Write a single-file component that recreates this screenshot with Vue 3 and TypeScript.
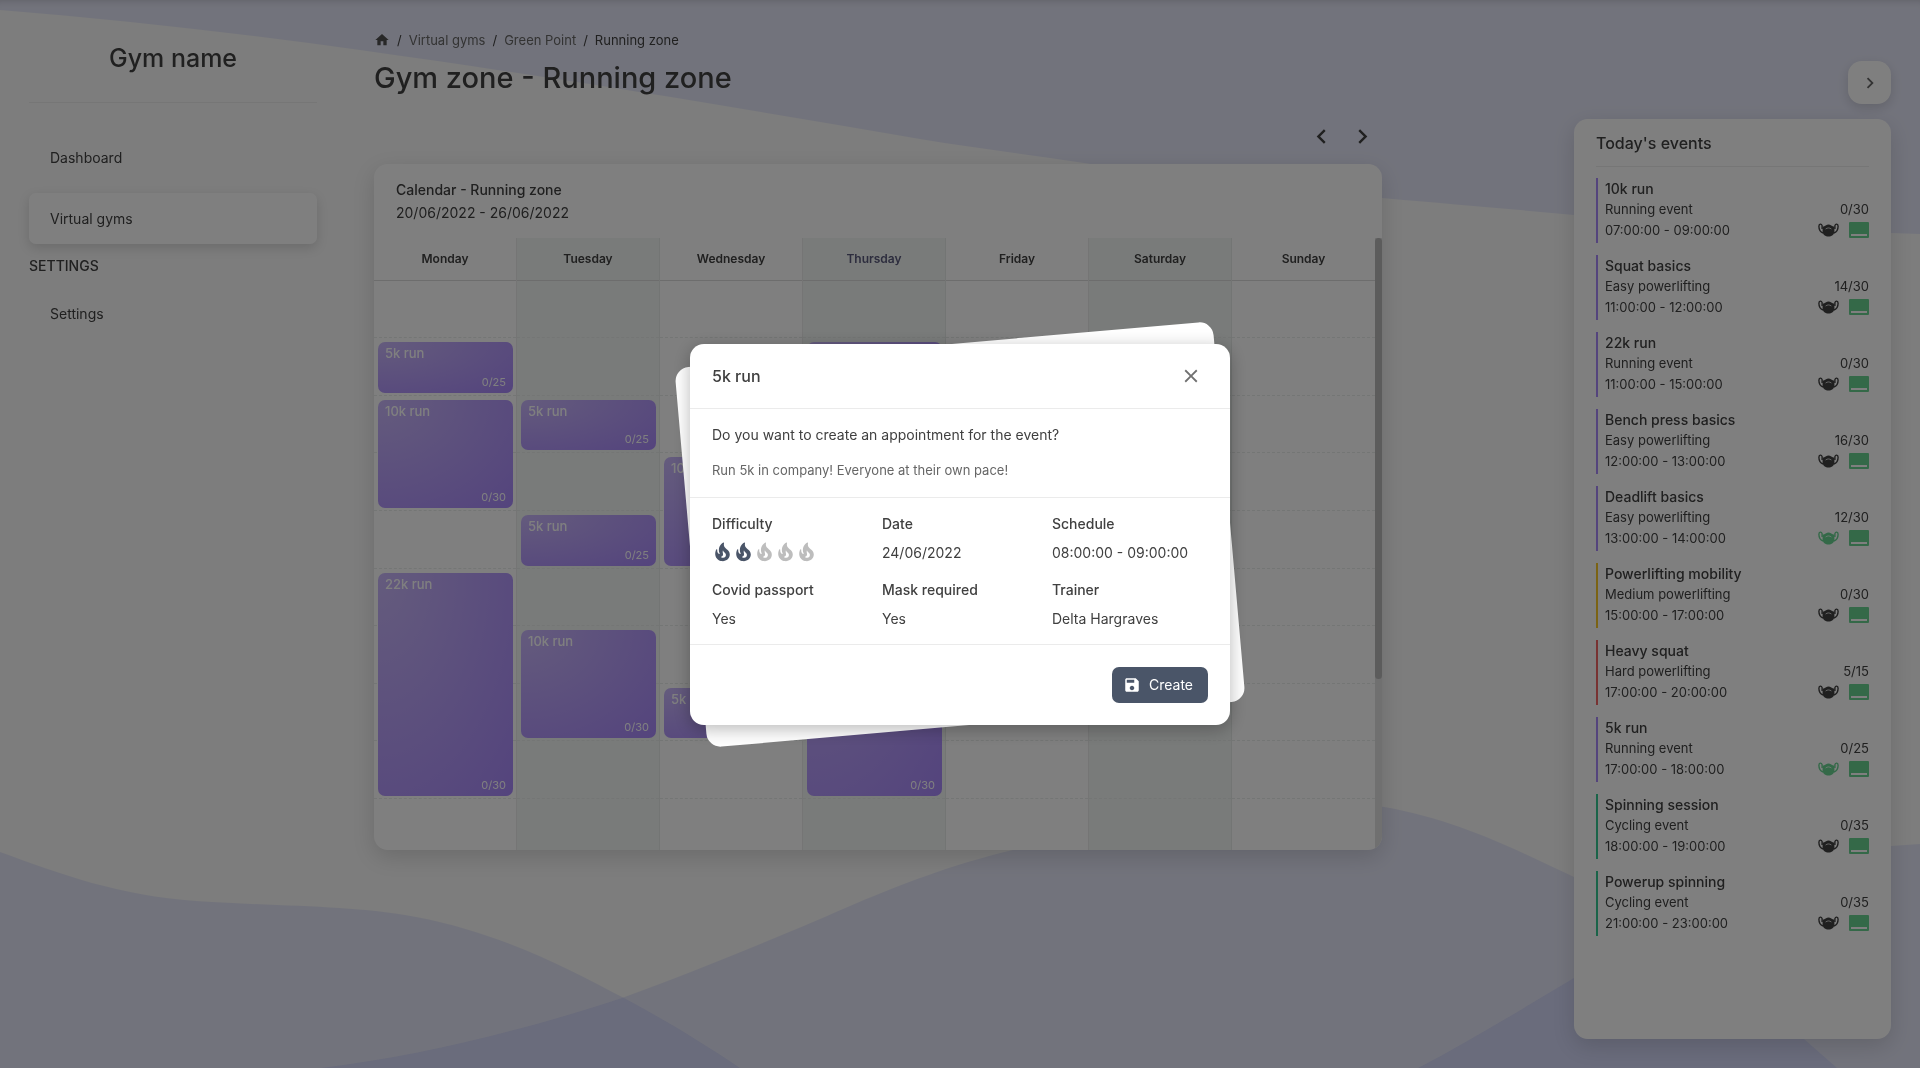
<script setup lang="ts">
interface CalendarEvent {
  name: string
  count: string
  start: number
  span: number
}

interface Day {
  name: string
  today?: boolean
  events: CalendarEvent[]
}

interface TodayEvent {
  name: string
  activity: string
  schedule: string
  count: string
  level: 'easy' | 'medium' | 'hard' | 'cycling'
  mask?: boolean
}

const run5 = (start: number): CalendarEvent => ({ name: '5k run', count: '0/25', start, span: 1 })
const run10 = (start: number): CalendarEvent => ({ name: '10k run', count: '0/30', start, span: 2 })
const run22 = (start: number): CalendarEvent => ({ name: '22k run', count: '0/30', start, span: 4 })

const days: Day[] = [
  { name: 'Monday', events: [run5(2), run10(3), run22(6)] },
  { name: 'Tuesday', events: [run5(3), run5(5), run10(7)] },
  { name: 'Wednesday', events: [run10(4), run5(8)] },
  { name: 'Thursday', today: true, events: [run5(2), run22(6)] },
  { name: 'Friday', events: [] },
  { name: 'Saturday', events: [] },
  { name: 'Sunday', events: [] },
]

const todayEvents: TodayEvent[] = [
  { name: '10k run', activity: 'Running event', schedule: '07:00:00 - 09:00:00', count: '0/30', level: 'easy' },
  { name: 'Squat basics', activity: 'Easy powerlifting', schedule: '11:00:00 - 12:00:00', count: '14/30', level: 'easy' },
  { name: '22k run', activity: 'Running event', schedule: '11:00:00 - 15:00:00', count: '0/30', level: 'easy' },
  { name: 'Bench press basics', activity: 'Easy powerlifting', schedule: '12:00:00 - 13:00:00', count: '16/30', level: 'easy' },
  { name: 'Deadlift basics', activity: 'Easy powerlifting', schedule: '13:00:00 - 14:00:00', count: '12/30', level: 'easy', mask: true },
  { name: 'Powerlifting mobility', activity: 'Medium powerlifting', schedule: '15:00:00 - 17:00:00', count: '0/30', level: 'medium' },
  { name: 'Heavy squat', activity: 'Hard powerlifting', schedule: '17:00:00 - 20:00:00', count: '5/15', level: 'hard' },
  { name: '5k run', activity: 'Running event', schedule: '17:00:00 - 18:00:00', count: '0/25', level: 'easy', mask: true },
  { name: 'Spinning session', activity: 'Cycling event', schedule: '18:00:00 - 19:00:00', count: '0/35', level: 'cycling' },
  { name: 'Powerup spinning', activity: 'Cycling event', schedule: '21:00:00 - 23:00:00', count: '0/35', level: 'cycling' },
]

const difficulty = 2
</script>

<template>
  <div class="page">
    <svg class="waves" viewBox="0 0 1920 1068" preserveAspectRatio="none" aria-hidden="true">
      <path d="M0 0H1920V234C1800 230 1680 223 1574 215C1510 209 1450 204 1382 198C1270 189 1180 178 1084 163C1030 155 975 148 920 139C740 108 560 78 360 50C240 33 120 20 0 10Z" />
      <path d="M0 852C60 874 120 896 196 901C290 907 350 905 416 917C505 934 570 970 624 998C665 1020 700 1041 740 1068H0Z" />
      <path d="M321 1068C430 1055 540 1025 622 998C700 970 800 928 857 903C900 885 950 865 1013 850C1130 812 1270 788 1384 807C1460 820 1520 852 1574 877C1670 925 1750 990 1804 1039L1837 1068Z" />
      <path d="M1418 1068C1470 1041 1520 1010 1574 978C1680 910 1770 850 1891 846L1920 844V1068Z" />
    </svg>

    <div class="layout">
      <aside class="sidebar">
        <h2 class="brand">Gym name</h2>
        <nav>
          <a class="nav-link" href="#dashboard">Dashboard</a>
          <a class="nav-link active" href="#gyms">Virtual gyms</a>
          <h6 class="nav-title">SETTINGS</h6>
          <a class="nav-link" href="#settings">Settings</a>
        </nav>
      </aside>

      <main class="main">
        <nav class="crumbs" aria-label="Breadcrumb">
          <a href="#home" aria-label="Home">
            <svg class="home" viewBox="0 0 24 24"><path d="M10 20v-6h4v6h5v-8h3L12 3 2 12h3v8z" /></svg>
          </a>
          <span class="slash">/</span>
          <a href="#gyms">Virtual gyms</a>
          <span class="slash">/</span>
          <a href="#green-point">Green Point</a>
          <span class="slash">/</span>
          <span class="current">Running zone</span>
        </nav>
        <h1 class="title">Gym zone - Running zone</h1>

        <div class="pager">
          <button type="button" aria-label="Previous week">
            <svg viewBox="0 0 24 24"><path d="M15.41 7.41 14 6l-6 6 6 6 1.41-1.41L10.83 12z" /></svg>
          </button>
          <button type="button" aria-label="Next week">
            <svg viewBox="0 0 24 24"><path d="M10 6 8.59 7.41 13.17 12l-4.58 4.59L10 18l6-6z" /></svg>
          </button>
        </div>

        <section class="calendar">
          <header class="calendar-head">
            <h2>Calendar - Running zone</h2>
            <p>20/06/2022 - 26/06/2022</p>
          </header>
          <div class="calendar-body">
            <div class="week">
              <div v-for="day in days" :key="day.name" class="day">
                <h3 class="day-name" :class="{ today: day.today }">{{ day.name }}</h3>
                <div class="hours">
                  <span v-for="hour in 10" :key="hour" class="hour" :style="{ gridRow: hour }"></span>
                  <article
                    v-for="event in day.events"
                    :key="event.start"
                    class="event"
                    :style="{ gridRow: `${event.start} / span ${event.span}` }"
                  >
                    <span class="event-name">{{ event.name }}</span>
                    <span class="event-count">{{ event.count }}</span>
                  </article>
                </div>
              </div>
            </div>
            <div class="track"><div class="thumb"></div></div>
          </div>
        </section>
      </main>

      <aside class="side">
        <button class="toggle" type="button" aria-label="Hide events">
          <svg viewBox="0 0 24 24"><path d="M10 6 8.59 7.41 13.17 12l-4.58 4.59L10 18l6-6z" /></svg>
        </button>
        <section class="panel">
          <h2 class="panel-title">Today's events</h2>
          <ul class="list">
            <li v-for="event in todayEvents" :key="event.name" class="item" :class="event.level">
              <h3>{{ event.name }}</h3>
              <div class="row activity">
                <span>{{ event.activity }}</span>
                <span>{{ event.count }}</span>
              </div>
              <div class="row schedule">
                <span>{{ event.schedule }}</span>
                <span class="icons">
                  <svg class="mask" :class="{ on: event.mask }" viewBox="0 0 21 14">
                    <path class="strap" d="M5 10C2.500 9 .9 6 .9 3.200C1 .6 3.400 .4 4.100 2.600V6M16 10C18.500 9 20.100 6 20.100 3.200C20 .6 17.600 .4 16.900 2.600V6" />
                    <path d="M4.600 3.800C7 3.400 8.500 1.600 10.500 1.600S14 3.400 16.400 3.800V8.500C16.400 11.500 13.500 13.600 10.500 13.600S4.600 11.500 4.600 8.500Z" />
                    <path class="fold" d="M7.600 6C9.400 4.600 11.600 4.600 13.400 6" />
                  </svg>
                  <svg class="card" viewBox="0 0 20 16">
                    <path fill-rule="evenodd" d="M1 0H19A1 1 0 0 1 20 1V15A1 1 0 0 1 19 16H1A1 1 0 0 1 0 15V1A1 1 0 0 1 1 0ZM2 12V14H18V12Z" />
                  </svg>
                </span>
              </div>
            </li>
          </ul>
        </section>
      </aside>
    </div>

    <div class="overlay">
      <div class="modal" role="dialog" aria-modal="true" aria-labelledby="modal-title">
        <div class="tilt"></div>
        <div class="sheet">
          <header class="modal-head">
            <h2 id="modal-title">5k run</h2>
            <button class="close" type="button" aria-label="Close">
              <svg viewBox="0 0 24 24"><path d="M19 6.410 17.590 5 12 10.590 6.410 5 5 6.410 10.590 12 5 17.590 6.410 19 12 13.410 17.590 19 19 17.590 13.410 12z" /></svg>
            </button>
          </header>
          <div class="modal-text">
            <p>Do you want to create an appointment for the event?</p>
            <p class="note">Run 5k in company! Everyone at their own pace!</p>
          </div>
          <dl class="details">
            <div>
              <dt>Difficulty</dt>
              <dd class="flames">
                <svg v-for="n in 5" :key="n" :class="{ lit: n <= difficulty }" viewBox="0.500 0 23 24">
                  <path d="M19.480 12.350c-1.570-4.080-7.160-4.300-5.810-10.230.1-.44-.37-.78-.75-.55C9.290 3.710 6.680 8 8.870 13.620c.18.46-.36.89-.75.59-1.810-1.370-2-3.340-1.840-4.750.06-.52-.62-.77-.91-.34C4.690 10.160 4 11.840 4 14.370c.38 5.600 5.110 7.320 6.810 7.540 2.430.31 5.060-.14 6.950-1.870 2.080-1.930 2.840-5.010 1.720-7.690zm-9.280 5.030c1.440-.35 2.180-1.390 2.380-2.310.33-1.430-.96-2.830-.09-5.090.33 1.870 3.270 3.040 3.270 5.080.08 2.530-2.660 4.700-5.560 2.320z" />
                </svg>
              </dd>
            </div>
            <div><dt>Date</dt><dd>24/06/2022</dd></div>
            <div><dt>Schedule</dt><dd>08:00:00 - 09:00:00</dd></div>
            <div><dt>Covid passport</dt><dd>Yes</dd></div>
            <div><dt>Mask required</dt><dd>Yes</dd></div>
            <div><dt>Trainer</dt><dd>Delta Hargraves</dd></div>
          </dl>
          <footer class="modal-foot">
            <button class="create" type="button">
              <svg viewBox="0 0 24 24"><path d="M17 3H5c-1.110 0-2 .9-2 2v14c0 1.100.89 2 2 2h14c1.100 0 2-.9 2-2V7l-4-4zm-5 16c-1.660 0-3-1.340-3-3s1.340-3 3-3 3 1.340 3 3-1.340 3-3 3zm3-10H5V5h10v4z" /></svg>
              Create
            </button>
          </footer>
        </div>
      </div>
    </div>
  </div>
</template>

<style>
body {
  margin: 0;
  background: #fafafa;
}
</style>

<style scoped>
.page {
  min-height: 100vh;
  font-family: Inter, "Liberation Sans", sans-serif;
  font-size: 14px;
  color: #404040;
}
h1, h2, h3, h6, p, ul, dl, dd {
  margin: 0;
  padding: 0;
  font-weight: 400;
}
ul {
  list-style: none;
}
a {
  color: inherit;
  text-decoration: none;
}
button {
  border: 0;
  padding: 0;
  background: none;
  font: inherit;
  color: inherit;
  cursor: pointer;
}
svg {
  display: block;
  fill: currentColor;
}
.waves {
  position: fixed;
  inset: 0;
  width: 100%;
  height: 100%;
  fill: rgba(90, 106, 241, 0.13);
}
.layout {
  position: relative;
  display: grid;
  grid-template-columns: 288px minmax(0, 1fr) 317px;
  min-height: 100vh;
  padding: 0 29px;
  box-sizing: border-box;
  box-shadow: inset 0 8px 8px -8px rgba(0, 0, 0, 0.2);
}

.brand {
  height: 103px;
  margin-bottom: 29px;
  padding-top: 14px;
  box-sizing: border-box;
  border-bottom: 1px solid #ececec;
  font-size: 25px;
  font-weight: 500;
  line-height: 88px;
  text-align: center;
}
.nav-link {
  display: block;
  margin-bottom: 10px;
  padding: 0 21px;
  border-radius: 7px;
  font-size: 14px;
  line-height: 51px;
}
.nav-link.active {
  background: #fff;
  box-shadow: 0 4px 12px rgba(0, 0, 0, 0.14);
}
.nav-title {
  margin-bottom: 11px;
  font-size: 14px;
  font-weight: 500;
  line-height: 23px;
}

.main {
  padding: 29px 192px 29px 57px;
}
.crumbs {
  display: flex;
  align-items: center;
  gap: 7px;
  height: 21px;
  font-size: 13px;
  color: #666;
}
.home {
  width: 16px;
  height: 16px;
  color: #505050;
}
.slash,
.current {
  color: #404040;
}
.title {
  font-size: 29px;
  font-weight: 500;
  line-height: 56px;
}
.pager {
  display: flex;
  justify-content: flex-end;
  gap: 12px;
  padding: 16px 5px 13px;
}
.pager svg {
  width: 29px;
  height: 29px;
}
.calendar {
  border-radius: 14px;
  overflow: hidden;
  background: #fff;
  box-shadow: 0 7px 22px rgba(0, 0, 0, 0.14);
}
.calendar-head {
  padding: 14px 22px;
  line-height: 23px;
}
.calendar-head h2 {
  font-size: 14px;
  font-weight: 500;
}
.calendar-body {
  display: flex;
}
.week {
  flex: 1;
  display: grid;
  grid-template-columns: repeat(7, minmax(0, 1fr));
}
.day {
  border-right: 1px solid #ebebeb;
}
.day:last-child {
  border-right: 0;
}
.day:nth-child(even) {
  background: #f3f7f5;
  border-right-color: #e6eae8;
}
.day-name {
  border-bottom: 1px solid #dadada;
  font-size: 12px;
  font-weight: 600;
  line-height: 42px;
  text-align: center;
}
.day-name.today {
  color: #5a5a7c;
}
.hours {
  display: grid;
  grid-template-columns: 100%;
  grid-template-rows: 57px repeat(8, 1fr) 51px;
  height: 569px;
}
.hour {
  grid-column: 1;
  border-bottom: 1px dashed #e9ecea;
}
.hour:nth-child(10) {
  border: 0;
}
.event {
  grid-column: 1;
  display: flex;
  flex-direction: column;
  justify-content: space-between;
  margin: 4px 3px 3px 4px;
  padding: 2px 7px;
  border-radius: 7px;
  background: radial-gradient(ellipse at top left, #c9b7fb, #a888fb);
  color: #fff;
}
.event-name {
  font-size: 13px;
  font-weight: 500;
  line-height: 18px;
}
.event-count {
  font-size: 11px;
  line-height: 18px;
  text-align: right;
}
.track {
  width: 7px;
  background: #e0e0e0;
}
.thumb {
  height: 441px;
  border-radius: 4px;
  background: #b8b8b8;
}

.side {
  display: flex;
  flex-direction: column;
  align-items: flex-end;
  gap: 15px;
  padding: 61px 0 29px;
}
.toggle {
  display: grid;
  place-items: center;
  width: 43px;
  height: 43px;
  border-radius: 14px;
  background: #fff;
  color: #666;
  box-shadow: 0 4px 12px rgba(0, 0, 0, 0.14);
}
.toggle svg {
  width: 22px;
  height: 22px;
}
.panel {
  flex: 1;
  align-self: stretch;
  padding: 0 22px;
  border-radius: 14px;
  background: #fff;
  box-shadow: 0 7px 22px rgba(0, 0, 0, 0.14);
}
.panel-title {
  margin-bottom: 11px;
  padding-top: 2px;
  border-bottom: 1px solid #ececec;
  font-size: 16px;
  font-weight: 500;
  line-height: 45px;
}
.list {
  display: grid;
  gap: 12px;
}
.item {
  padding-left: 7px;
  border-left: 2px solid #a888fb;
}
.item.medium {
  border-color: #f6c628;
}
.item.hard {
  border-color: #f06464;
}
.item.cycling {
  border-color: #34c893;
}
.item h3 {
  font-size: 14px;
  font-weight: 500;
  line-height: 22px;
}
.row {
  display: flex;
  align-items: center;
  justify-content: space-between;
  font-size: 13px;
}
.activity {
  height: 17px;
}
.schedule {
  height: 26px;
}
.icons {
  display: flex;
  align-items: center;
  gap: 10px;
}
.mask {
  width: 21px;
  height: 14px;
}
.mask.on,
.card {
  color: #68d391;
}
.strap {
  fill: none;
  stroke: currentColor;
  stroke-width: 1.4;
}
.fold {
  fill: none;
  stroke: #fff;
  stroke-width: 1;
  opacity: 0.7;
}
.card {
  width: 20px;
  height: 16px;
}

.overlay {
  position: fixed;
  inset: 0;
  display: grid;
  place-items: center;
  background: rgba(0, 0, 0, 0.5);
}
.modal {
  position: relative;
  width: 540px;
}
.tilt {
  position: absolute;
  inset: 0;
  border-radius: 14px;
  background: #fff;
  transform: rotate(-5deg);
}
.sheet {
  position: relative;
  border-radius: 14px;
  background: #fff;
  box-shadow: 0 4px 18px rgba(0, 0, 0, 0.28);
}
.modal-head,
.modal-text,
.details {
  padding: 14px 22px;
  border-bottom: 1px solid #ebebeb;
}
.modal-head {
  display: flex;
  align-items: center;
  justify-content: space-between;
  height: 36px;
}
.modal-head h2 {
  font-size: 16px;
  font-weight: 500;
}
.close {
  margin-right: 6px;
  color: #707070;
}
.close svg {
  width: 22px;
  height: 22px;
}
.modal-text {
  display: grid;
  gap: 13px;
  padding-bottom: 15px;
  line-height: 23px;
}
.note {
  font-size: 13px;
  color: #666;
}
.details {
  display: grid;
  grid-template-columns: repeat(3, 1fr);
  gap: 14px;
}
.details dt {
  font-weight: 500;
  line-height: 23px;
}
.details dd {
  padding-top: 6px;
  line-height: 23px;
}
.details .flames {
  display: flex;
  height: 23px;
}
.flames svg {
  width: 21px;
  height: 22px;
  color: #bdbdbd;
}
.flames svg.lit {
  color: #4a5568;
}
.modal-foot {
  display: flex;
  justify-content: flex-end;
  padding: 22px;
}
.create {
  display: flex;
  align-items: center;
  gap: 8px;
  height: 36px;
  padding: 0 15px 0 11px;
  border-radius: 7px;
  background: #4a5568;
  color: #fff;
}
.create svg {
  width: 18px;
  height: 18px;
}
</style>
